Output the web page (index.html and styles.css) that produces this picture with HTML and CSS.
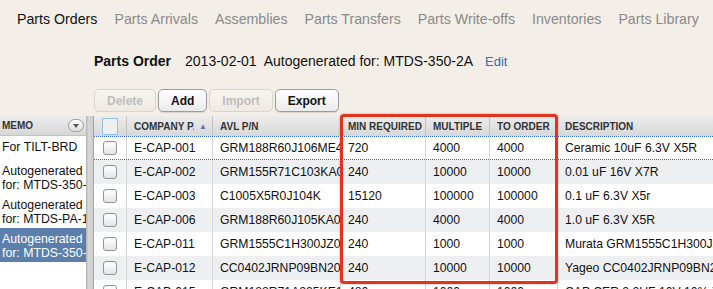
FILE: index.html
```html
<!DOCTYPE html>
<html lang="en">
<head>
  <meta charset="UTF-8">
  <title>Parts Orders</title>
  <link rel="stylesheet" href="styles.css">
</head>
<body>

<nav class="tabs">
  <a class="active" href="#">Parts Orders</a>
  <a href="#">Parts Arrivals</a>
  <a href="#">Assemblies</a>
  <a href="#">Parts Transfers</a>
  <a href="#">Parts Write-offs</a>
  <a href="#">Inventories</a>
  <a href="#">Parts Library</a>
</nav>

<div class="order-head">
  <h2>Parts Order</h2>
  <span class="order-date">2013-02-01</span>
  <span>Autogenerated for: MTDS-350-2A</span>
  <a class="edit" href="#">Edit</a>
</div>

<div class="toolbar">
  <button disabled>Delete</button>
  <button>Add</button>
  <button disabled>Import</button>
  <button>Export</button>
</div>

<div class="workspace">
  <div class="memo">
    <div class="memo-head">
      <span>MEMO</span>
      <span class="memo-menu"></span>
    </div>
    <div class="memo-row single">For TILT-BRD</div>
    <div class="memo-row">Autogenerated<br>for: MTDS-350-2A</div>
    <div class="memo-row">Autogenerated<br>for: MTDS-PA-1</div>
    <div class="memo-row selected">Autogenerated<br>for: MTDS-350-2A</div>
  </div>

  <div class="splitter"></div>

  <div class="grid">
    <div class="row head">
      <div class="cell check"><span class="head-box"></span></div>
      <div class="cell sorted"><span class="label">COMPANY PART</span><span class="arrow">&#9650;</span></div>
      <div class="cell">AVL P/N</div>
      <div class="cell">MIN REQUIRED</div>
      <div class="cell">MULTIPLE</div>
      <div class="cell">TO ORDER</div>
      <div class="cell">DESCRIPTION</div>
    </div>
    <div class="row focus">
      <div class="cell check"><span class="box"></span></div>
      <div class="cell">E-CAP-001</div>
      <div class="cell">GRM188R60J106ME47</div>
      <div class="cell">720</div>
      <div class="cell">4000</div>
      <div class="cell">4000</div>
      <div class="cell">Ceramic 10uF 6.3V X5R</div>
    </div>
    <div class="row alt">
      <div class="cell check"><span class="box"></span></div>
      <div class="cell">E-CAP-002</div>
      <div class="cell">GRM155R71C103KA01</div>
      <div class="cell">240</div>
      <div class="cell">10000</div>
      <div class="cell">10000</div>
      <div class="cell">0.01 uF 16V X7R</div>
    </div>
    <div class="row">
      <div class="cell check"><span class="box"></span></div>
      <div class="cell">E-CAP-003</div>
      <div class="cell">C1005X5R0J104K</div>
      <div class="cell">15120</div>
      <div class="cell">100000</div>
      <div class="cell">100000</div>
      <div class="cell">0.1 uF 6.3V X5r</div>
    </div>
    <div class="row alt">
      <div class="cell check"><span class="box"></span></div>
      <div class="cell">E-CAP-006</div>
      <div class="cell">GRM188R60J105KA01</div>
      <div class="cell">240</div>
      <div class="cell">4000</div>
      <div class="cell">4000</div>
      <div class="cell">1.0 uF 6.3V X5R</div>
    </div>
    <div class="row">
      <div class="cell check"><span class="box"></span></div>
      <div class="cell">E-CAP-011</div>
      <div class="cell">GRM1555C1H300JZ01</div>
      <div class="cell">240</div>
      <div class="cell">1000</div>
      <div class="cell">1000</div>
      <div class="cell">Murata GRM1555C1H300JZ01D</div>
    </div>
    <div class="row alt">
      <div class="cell check"><span class="box"></span></div>
      <div class="cell">E-CAP-012</div>
      <div class="cell">CC0402JRNP09BN200</div>
      <div class="cell">240</div>
      <div class="cell">10000</div>
      <div class="cell">10000</div>
      <div class="cell">Yageo CC0402JRNP09BN200</div>
    </div>
    <div class="row">
      <div class="cell check"><span class="box"></span></div>
      <div class="cell">E-CAP-015</div>
      <div class="cell">GRM188R71A225KE15</div>
      <div class="cell">480</div>
      <div class="cell">1000</div>
      <div class="cell">1000</div>
      <div class="cell">CAP CER 2.2UF 10V 10% X5R</div>
    </div>
  </div>
</div>

<div class="callout"></div>

</body>
</html>
```

FILE: styles.css
```css
body {
  margin: 0;
  font-family: "Liberation Sans", Arial, sans-serif;
  background: #f3efe8;
  color: #111;
  height: 100vh;
  overflow: hidden;
  position: relative;
}
.tabs {
  display: flex;
  gap: 17px;
  padding: 10px 0 0 17px;
  font-size: 14.2px;
  line-height: 18px;
  white-space: nowrap;
}
.tabs a {
  color: #8a8a8a;
  text-decoration: none;
}
.tabs a.active { color: #111; }

.order-head {
  display: flex;
  align-items: baseline;
  padding-left: 94px;
  margin-top: 24px;
  font-size: 14px;
  line-height: 18px;
  white-space: nowrap;
}
.order-head h2 {
  font-size: 14px;
  margin: 0 14px 0 0;
}
.order-date { margin-right: 7px; }
.edit {
  margin-left: 12px;
  font-size: 13px;
  color: #2a6ec0;
  text-decoration: none;
}

.toolbar {
  display: flex;
  gap: 2px;
  padding-left: 94px;
  margin-top: 18px;
}
.toolbar button {
  height: 23px;
  padding: 0 12px;
  font: bold 12px "Liberation Sans", Arial, sans-serif;
  color: #111;
  border: 1px solid #9c9c9c;
  border-radius: 5px;
  background: linear-gradient(#ffffff, #ebebeb);
  box-shadow: 0 1px 1px rgba(0,0,0,0.12);
}
.toolbar button:disabled {
  color: #bdbdbd;
  border-color: #d9d4cc;
  background: linear-gradient(#f8f5f0, #eeeae3);
  box-shadow: none;
}

.workspace {
  display: flex;
  margin-top: 4px;
  height: calc(100vh - 115px);
}
.memo {
  width: 86px;
  flex: none;
  background: #fff;
  overflow: hidden;
  font-size: 12.3px;
}
.memo-head {
  display: flex;
  align-items: center;
  justify-content: space-between;
  height: 20px;
  padding: 0 2px;
  background: linear-gradient(#ededed, #d7d7d7);
  border-bottom: 1px solid #c4c4c4;
  box-sizing: border-box;
  font-size: 10px;
  font-weight: bold;
  color: #333;
}
.memo-menu {
  width: 14px;
  height: 11px;
  border: 1px solid #9d9d9d;
  border-radius: 7px;
  background: linear-gradient(#fdfdfd, #dedede);
  position: relative;
}
.memo-menu::after {
  content: "";
  position: absolute;
  left: 4px;
  top: 4px;
  border-left: 3px solid transparent;
  border-right: 3px solid transparent;
  border-top: 4px solid #555;
}
.memo-row {
  height: 34px;
  box-sizing: border-box;
  padding: 4px 0 2px 2px;
  line-height: 14px;
  white-space: nowrap;
  overflow: hidden;
}
.memo-row.single { height: 24px; }
.memo-row.selected {
  background: #5b7ead;
  color: #fff;
}

.splitter {
  width: 7px;
  flex: none;
  background: linear-gradient(to right, #b3b3b3, #d9d9d9 40%, #cbcbcb);
}
.grid {
  flex: 1;
  overflow: hidden;
  background: #fff;
  border-left: 1px solid #a9a9a9;
}
.row {
  display: grid;
  grid-template-columns: 33px 86px 128px 85px 64px 68px 220px;
  height: 24px;
  box-sizing: border-box;
  font-size: 12.2px;
}
.row.alt { background: #eeeff1; }
.row.focus {
  border-top: 1px dotted #2e6fd2;
  border-bottom: 1px dotted #2e6fd2;
}
.cell {
  display: flex;
  align-items: center;
  padding-left: 7px;
  border-right: 1px solid #d6d6d6;
  white-space: nowrap;
  overflow: hidden;
  min-width: 0;
}
.row.head {
  height: 20px;
  background: linear-gradient(#ececec, #d8d8d8);
  font-size: 10px;
  font-weight: bold;
  color: #333;
}
.row.head .cell { border-right-color: #c4c4c4; }
.cell.check {
  justify-content: center;
  padding-left: 0;
}
.box {
  width: 12px;
  height: 12px;
  border: 1px solid #939393;
  border-radius: 3px;
  background: linear-gradient(#ffffff, #e4e4e4);
}
.head-box {
  width: 14px;
  height: 15px;
  border: 1px solid #94c0ea;
  background: #efefef;
}
.sorted .label {
  width: 60px;
  overflow: hidden;
  flex: none;
}
.arrow {
  margin-left: 5px;
  font-size: 8px;
  color: #5877b0;
}

.callout {
  position: absolute;
  left: 340px;
  top: 114px;
  width: 212px;
  height: 164px;
  border: 3px solid #e4321d;
  border-radius: 4px;
  box-shadow: 0 0 2px rgba(0,0,0,0.35);
}
```
